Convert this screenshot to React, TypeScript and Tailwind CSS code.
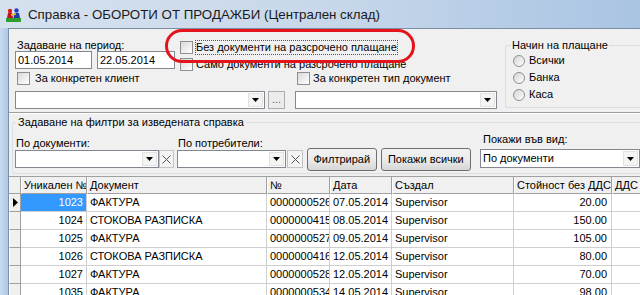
import React from 'react';

type Row = { id: string; doc: string; num: string; date: string; user: string; sum: string };

const rows: Row[] = [
    { id: '1023', doc: 'ФАКТУРА', num: '0000000526', date: '07.05.2014', user: 'Supervisor', sum: '20.00' },
    { id: '1024', doc: 'СТОКОВА РАЗПИСКА', num: '0000000415', date: '08.05.2014', user: 'Supervisor', sum: '150.00' },
    { id: '1025', doc: 'ФАКТУРА', num: '0000000527', date: '09.05.2014', user: 'Supervisor', sum: '105.00' },
    { id: '1026', doc: 'СТОКОВА РАЗПИСКА', num: '0000000416', date: '12.05.2014', user: 'Supervisor', sum: '80.00' },
    { id: '1027', doc: 'ФАКТУРА', num: '0000000528', date: '12.05.2014', user: 'Supervisor', sum: '70.00' },
    { id: '1035', doc: 'ФАКТУРА', num: '0000000534', date: '14.05.2014', user: 'Supervisor', sum: '98.00' },
];

const CheckBox = () => (
    <span className="inline-block w-[13px] h-[13px] shrink-0 border border-[#8e8f8f] bg-gradient-to-br from-[#d9d9d9] to-white" />
);

const Radio = () => (
    <span className="inline-block w-[12px] h-[12px] shrink-0 rounded-full border border-[#8e8f8f] bg-gradient-to-br from-[#d4d4d4] to-white" />
);

const Arrow = () => (
    <svg width="7" height="4" viewBox="0 0 7 4">
        <path d="M0 0h7L3.5 4z" fill="#000" />
    </svg>
);

const Combo: React.FC<{ className: string; value?: string }> = ({ className, value }) => (
    <div className={`flex border border-[#828790] bg-white ${className}`}>
        <div className="flex-1 pl-[2px] leading-[16px] truncate">{value}</div>
        <div className="w-[15px] my-[1px] mr-[1px] flex items-center justify-center bg-[#f4f4f4] border border-[#e2e2e2]">
            <Arrow />
        </div>
    </div>
);

const ClearBtn: React.FC<{ className: string }> = ({ className }) => (
    <div className={`h-[18px] flex items-center justify-center border border-[#c4c4c4] bg-[#f4f4f4] ${className}`}>
        <svg width="9" height="9" viewBox="0 0 9 9">
            <path d="M0.5 0.5l8 8M8.5 0.5l-8 8" stroke="#555" strokeWidth="1" />
        </svg>
    </div>
);

const Button: React.FC<{ className: string; label: string }> = ({ className, label }) => (
    <div
        className={`h-[23px] flex items-center justify-center rounded-[3px] border border-[#707070] bg-gradient-to-b from-[#f2f2f2] via-[#ebebeb] to-[#d6d6d6] ${className}`}
    >
        {label}
    </div>
);

const TitleIcon = () => (
    <svg width="17" height="16" viewBox="0 0 17 16">
        <rect x="1" y="11" width="15" height="4" fill="#2f9e2f" />
        <circle cx="5" cy="4" r="2.2" fill="#d42020" />
        <path d="M2 11l1-5h4l1 5z" fill="#c01818" />
        <circle cx="11.5" cy="3.5" r="2.2" fill="#2040c0" />
        <path d="M8.5 11l1-5h4.5l1 5z" fill="#1c3aa8" />
        <path d="M6 8l5 -1" stroke="#f0c020" strokeWidth="1.5" />
    </svg>
);

const cols = [
    { label: 'Уникален №', cls: 'w-[66px]' },
    { label: 'Документ', cls: 'w-[180px]' },
    { label: '№', cls: 'w-[63px]' },
    { label: 'Дата', cls: 'w-[62px]' },
    { label: 'Създал', cls: 'w-[122px]' },
    { label: 'Стойност без ДДС', cls: 'w-[98px]' },
    { label: 'ДДС', cls: 'w-[60px]' },
];

export default function App() {
    return (
        <div className="relative w-[640px] h-[295px] overflow-hidden flex flex-col bg-[#b8cee8] text-[11px] text-black font-['Liberation_Sans',Arial,sans-serif]">
            <div className="h-[28px] shrink-0 flex items-center gap-[6px] pl-[5px] pt-[2px] bg-gradient-to-r from-[#d6e1ee] via-[#c8d8ea] to-[#a9c4e3]">
                <TitleIcon />
                <span className="text-[13.3px] text-[#1a1a1a]">Справка - ОБОРОТИ ОТ ПРОДАЖБИ (Централен склад)</span>
            </div>

            <div className="flex-1 flex min-h-0">
                <div className="w-[8px] shrink-0 bg-gradient-to-r from-[#c9dbef] to-[#aec7e4]" />
                <div className="flex-1 flex flex-col min-w-0 bg-[#f0f0f0] border-l border-t border-[#7d8fa5]">
                    {/* period / payment section */}
                    <div className="flex h-[83px] pl-[6px] pt-[10px] shrink-0">
                        <div className="w-[482px] shrink-0 flex flex-col">
                            <div className="flex h-[30px]">
                                <div className="w-[165px] shrink-0 flex flex-col">
                                    <div className="h-[12px] leading-[12px] pl-[2px]">Задаване на период:</div>
                                    <div className="flex gap-[5px]">
                                        <div className="w-[77px] h-[18px] border border-[#828790] bg-white pl-[2px] leading-[16px]">01.05.2014</div>
                                        <div className="w-[78px] h-[18px] border border-[#828790] bg-white pl-[2px] leading-[16px]">22.05.2014</div>
                                    </div>
                                </div>
                                <div className="flex flex-col pt-[2px] gap-[4px]">
                                    <div className="flex items-center gap-[3px] h-[13px]">
                                        <CheckBox />
                                        <span className="leading-[13px] outline-1 outline-dotted outline-[#555]">Без документи на разсрочено плащане</span>
                                    </div>
                                    <div className="flex items-center gap-[3px] h-[13px]">
                                        <CheckBox />
                                        <span className="leading-[13px]">Само документи на разсрочено плащане</span>
                                    </div>
                                </div>
                            </div>
                            <div className="flex mt-[3px] h-[13px]">
                                <div className="w-[280px] shrink-0 flex items-center gap-[5px] pl-[2px]">
                                    <CheckBox />
                                    <span>За конкретен клиент</span>
                                </div>
                                <div className="flex items-center gap-[3px] pl-[2px]">
                                    <CheckBox />
                                    <span>За конкретен тип документ</span>
                                </div>
                            </div>
                            <div className="flex mt-[6px] h-[18px]">
                                <Combo className="w-[250px] h-[18px]" />
                                <div className="ml-[3px] w-[17px] h-[18px] flex items-end justify-center pb-[3px] border border-[#adadad] bg-[#ececec] text-[#666] leading-none">...</div>
                                <Combo className="ml-[10px] w-[202px] h-[18px]" />
                            </div>
                        </div>
                        <div className="relative ml-[8px] mt-[6px] flex-1 h-[63px] border border-r-0 border-[#d5dfe5] rounded-l-[3px]">
                            <span className="absolute -top-[7px] left-[5px] px-[1px] bg-[#f0f0f0] leading-[12px]">Начин на плащане</span>
                            <div className="flex flex-col pt-[8px] pl-[7px] gap-[4px]">
                                {['Всички', 'Банка', 'Каса'].map((r) => (
                                    <div key={r} className="flex items-center gap-[4px] h-[13px]">
                                        <Radio />
                                        <span>{r}</span>
                                    </div>
                                ))}
                            </div>
                        </div>
                    </div>

                    <div className="h-[2px] shrink-0 border-t border-[#a0a0a0] border-b border-b-white" />

                    {/* filter group */}
                    <div className="relative mt-[8px] ml-[3px] h-[52px] shrink-0 border border-r-0 border-[#d5dfe5] rounded-l-[3px]">
                        <span className="absolute -top-[7px] left-[3px] px-[2px] bg-[#f0f0f0] leading-[12px]">Задаване на филтри за изведената справка</span>
                        <div className="flex items-start pl-[2px]">
                            <div className="flex flex-col">
                                <div className="mt-[14px] h-[12px] leading-[12px] pl-[1px]">По документи:</div>
                                <div className="flex mt-[1px]">
                                    <Combo className="w-[144px] h-[18px]" />
                                    <ClearBtn className="w-[15px]" />
                                </div>
                            </div>
                            <div className="flex flex-col ml-[3px]">
                                <div className="mt-[14px] h-[12px] leading-[12px] pl-[1px]">По потребители:</div>
                                <div className="flex mt-[1px] gap-[1px]">
                                    <Combo className="w-[109px] h-[18px]" />
                                    <ClearBtn className="w-[16px]" />
                                </div>
                            </div>
                            <Button className="ml-[4px] mt-[25px] w-[77px]" label="Филтрирай" />
                            <Button className="ml-[4px] mt-[25px] w-[100px]" label="Покажи всички" />
                            <div className="flex flex-col ml-[9px]">
                                <div className="mt-[10px] h-[12px] leading-[12px] pl-[3px]">Покажи във вид:</div>
                                <Combo className="mt-[4px] w-[160px] h-[19px]" value="По документи" />
                            </div>
                        </div>
                    </div>

                    {/* grid */}
                    <div className="mt-[2px] flex-1 flex flex-col bg-white border-t border-[#a0a0a0]">
                        <div className="flex h-[17px] shrink-0 bg-[#f0f0f0]">
                            <div className="w-[12px] shrink-0 border-r border-b border-[#a0a0a0]" />
                            {cols.map((c) => (
                                <div
                                    key={c.label}
                                    className={`${c.cls} shrink-0 overflow-hidden whitespace-nowrap pl-[2px] leading-[16px] border-r border-b border-[#a0a0a0] border-l border-l-white`}
                                >
                                    {c.label}
                                </div>
                            ))}
                        </div>
                        {rows.map((r, i) => (
                            <div key={r.id} className="flex h-[18px] shrink-0 leading-[17px]">
                                <div className="w-[12px] shrink-0 flex items-center justify-center bg-[#f0f0f0] border-r border-b border-[#a0a0a0] border-l border-l-white">
                                    {i === 0 && (
                                        <svg width="5" height="9" viewBox="0 0 5 9">
                                            <path d="M0 0l5 4.5L0 9z" fill="#000" />
                                        </svg>
                                    )}
                                </div>
                                <div
                                    className={`w-[66px] shrink-0 text-right pr-[3px] border-r border-b border-[#cfcfcf] ${
                                        i === 0 ? 'bg-[#3399ff] text-white' : ''
                                    }`}
                                >
                                    {r.id}
                                </div>
                                <div className="w-[180px] shrink-0 pl-[3px] border-r border-b border-[#cfcfcf]">{r.doc}</div>
                                <div className="w-[63px] shrink-0 pl-[3px] overflow-hidden whitespace-nowrap border-r border-b border-[#cfcfcf]">{r.num}</div>
                                <div className="w-[62px] shrink-0 pl-[3px] border-r border-b border-[#cfcfcf]">{r.date}</div>
                                <div className="w-[122px] shrink-0 pl-[3px] border-r border-b border-[#cfcfcf]">{r.user}</div>
                                <div className="w-[98px] shrink-0 text-right pr-[4px] border-r border-b border-[#cfcfcf]">{r.sum}</div>
                                <div className="w-[60px] shrink-0 border-r border-b border-[#cfcfcf]" />
                            </div>
                        ))}
                    </div>
                </div>
            </div>

            {/* red highlight drawn over the form */}
            <div className="absolute left-[165px] top-[29px] w-[250px] h-[34px] rounded-[17px] border-[3px] border-[#e3141c] pointer-events-none" />
        </div>
    );
}
